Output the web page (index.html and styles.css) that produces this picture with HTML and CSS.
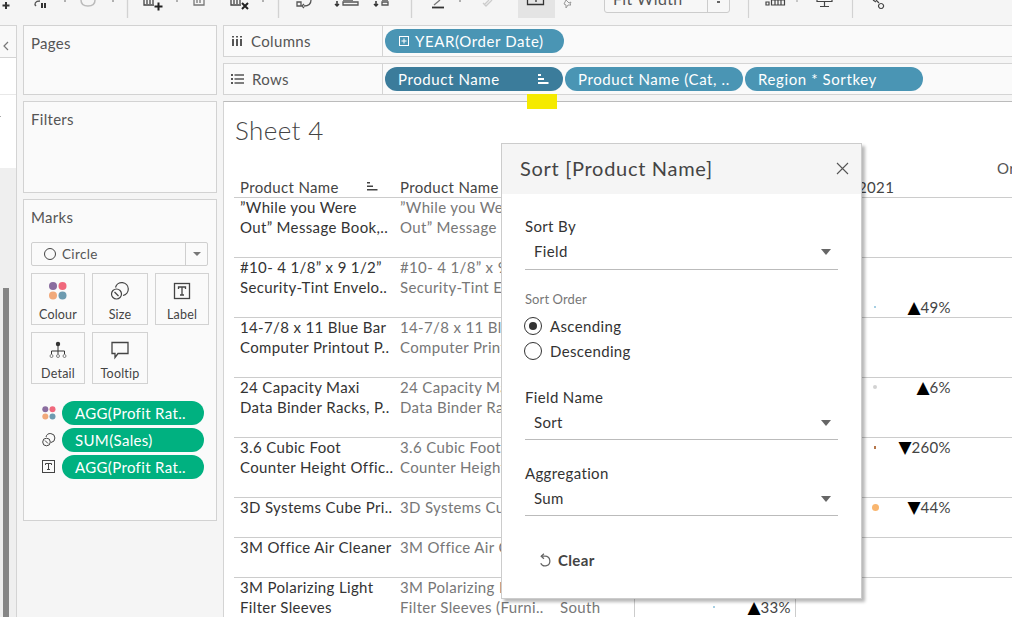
FILE: index.html
```html
<!DOCTYPE html>
<html lang="en">
<head>
<meta charset="utf-8">
<title>Sheet 4</title>
<link rel="stylesheet" href="styles.css">
</head>
<body>
<header class="toolbar">
  <svg class="tb-left" width="604" height="25" viewBox="0 0 604 25" fill="none" stroke="#444" stroke-width="1.3">
    <path d="M6 2v7M2.500 5.500h7" stroke="#333" stroke-width="2"/>
    <path d="M40 1c-5 0-6 3-4 5" stroke="#555"/>
    <path d="M42 3v5M45 3v5" stroke="#333" stroke-width="2"/>
    <path d="M81 0c0 4 3 6 7 6s7-2 7-6" stroke="#bbb" stroke-width="1.500"/>
    <path d="M64 1h2M112 1h2M176 1h2M262 1h2M459 1h2" stroke="#999"/>
    <path d="M127.500 0v18M278.500 0v18M411.500 0v18" stroke="#d2d2d2"/>
    <path d="M144 0v5h10M147 0v4M150 0v4M153 0v4" stroke="#444"/>
    <path d="M158.500 2.500v8M154.500 6.500h8" stroke="#222" stroke-width="2"/>
    <path d="M194 0v5h10v-5M197 0v3M200 0v3" stroke="#777"/>
    <path d="M231 0v5h10M234 0v4M237 0v4M240 0v4" stroke="#444"/>
    <path d="M242 3l6 6M248 3l-6 6" stroke="#222" stroke-width="2"/>
    <path d="M297 2h4v4h-4zM311 0c0 4-3 6-7 6M304 4l-2 2 2 2" stroke="#555"/>
    <path d="M337 1v5M335 4l2 2 2-2" stroke="#333" stroke-width="1.500"/>
    <path d="M343 0h10M343 2v3h15v-3z" stroke="#555"/>
    <path d="M376 1v5M374 4l2 2 2-2" stroke="#333" stroke-width="1.500"/>
    <path d="M382 2v3h6v-3zM382 0h6" stroke="#555"/>
    <path d="M432 7.500h12" stroke="#333" stroke-width="1.800"/>
    <path d="M434 5l6-5" stroke="#777"/>
    <path d="M484 5l5-5M483 3l3 3 6-6" stroke="#ccc"/>
    <rect x="518" y="-2" width="37" height="20" fill="#e4e4e4" stroke="none"/>
    <path d="M527.500 0v4.500h16v-4.500M536 0v2" stroke="#333"/>
    <path d="M566 0l3 3 2-1-1 2 1 1-3 0-2 3 0-3-2-1z" stroke="#999" stroke-width="1"/>
  </svg>
  <div class="zoom-select">
    <span class="zoom-text">Fit Width</span>
    <span class="zoom-arrow"><i class="zoom-caret"></i></span>
  </div>
  <svg class="tb-right" width="282" height="25" viewBox="730 0 282 25" fill="none" stroke="#444" stroke-width="1.200">
    <path d="M748.500 0v18M852.500 0v18" stroke="#d2d2d2"/>
    <path d="M766 2h3v3h-3zM771.500 5V0h13v5zM775 0v5M778 0v5M781 0v5" stroke="#444"/>
    <path d="M796 1h2" stroke="#999"/>
    <path d="M817 0v1.500h15v-1.500M824.500 1.500v5M820 6.500h9" stroke="#444"/>
    <path d="M873 0l3 2M881 3.500a2.500 2.500 0 1 0 .1 0zM876 0l3 3" stroke="#444"/>
  </svg>
</header>

<main class="workspace">
  <aside class="strip">
    <div class="strip-head"><svg width="6" height="10" viewBox="0 0 6 10" fill="none" stroke="#777" stroke-width="1.200"><path d="M5 1L1 5l4 4"/></svg></div>
    <div class="strip-white"><div class="strip-cell"></div><div class="strip-cell strip-cell-tall"><i class="strip-tick"></i></div></div>
    <div class="strip-grey"><div class="strip-thumb"></div></div>
  </aside>

  <section class="cards">
    <div class="card card-pages"><h2 class="card-title">Pages</h2></div>
    <div class="card card-filters"><h2 class="card-title">Filters</h2></div>
    <div class="card card-marks">
      <h2 class="card-title">Marks</h2>
      <div class="mark-select">
        <span class="mark-select-label"><i class="ring"></i>Circle</span>
        <span class="mark-select-arrow"><i class="caret-small"></i></span>
      </div>
      <div class="mark-grid">
        <div class="mark-btn">
          <svg width="20" height="20" viewBox="0 0 20 20"><circle cx="5" cy="5" r="4" fill="#8a6d9f"/><circle cx="14.500" cy="5" r="4" fill="#f0687c"/><circle cx="5" cy="14.500" r="4" fill="#f1a97a"/><circle cx="14.500" cy="14.500" r="4" fill="#6d9bb0"/></svg>
          <span>Colour</span>
        </div>
        <div class="mark-btn">
          <svg width="20" height="20" viewBox="0 0 20 20" fill="none" stroke="#444" stroke-width="1.200"><path d="M5.500 6.500a6.500 6.500 0 1 1 7.500 8"/><circle cx="6.500" cy="13" r="5"/><path d="M4.500 11l4 4"/></svg>
          <span>Size</span>
        </div>
        <div class="mark-btn">
          <svg width="20" height="20" viewBox="0 0 20 20" fill="none" stroke="#444" stroke-width="1.300"><rect x="2.500" y="2.500" width="15" height="15"/><path d="M6.500 8V6h7v2M10 6v8M8 14h4"/></svg>
          <span>Label</span>
        </div>
        <div class="mark-btn">
          <svg width="20" height="20" viewBox="0 0 20 20" fill="#333" stroke="#333"><circle cx="10" cy="4" r="2.200" stroke="none"/><path d="M10 6v8M3.500 11h13M3.500 11v3M16.500 11v3" fill="none"/><circle cx="3.500" cy="16" r="1.500" stroke-width=".6" fill="none"/><circle cx="10" cy="16" r="1.500" stroke-width=".6" fill="none"/><circle cx="16.500" cy="16" r="1.500" stroke-width=".6" fill="none"/></svg>
          <span>Detail</span>
        </div>
        <div class="mark-btn">
          <svg width="20" height="20" viewBox="0 0 20 20" fill="none" stroke="#444" stroke-width="1.300"><path d="M2 2.500h16v11H8l-3 4v-4H2z"/></svg>
          <span>Tooltip</span>
        </div>
      </div>
      <ul class="mark-pills">
        <li class="mark-pill-row">
          <svg width="14" height="14" viewBox="0 0 14 14"><circle cx="3.300" cy="3.300" r="3" fill="#8a6d9f"/><circle cx="10.500" cy="3.300" r="3" fill="#f0687c"/><circle cx="3.300" cy="10.500" r="3" fill="#f1a97a"/><circle cx="10.500" cy="10.500" r="3" fill="#6d9bb0"/></svg>
          <span class="pill-green">AGG(Profit Rat..</span>
        </li>
        <li class="mark-pill-row">
          <svg width="14" height="14" viewBox="0 0 14 14" fill="none" stroke="#444"><path d="M4 4a4.500 4.500 0 1 1 5 5.500"/><circle cx="4.500" cy="9" r="3.800"/><path d="M3 7.500l3 3"/></svg>
          <span class="pill-green">SUM(Sales)</span>
        </li>
        <li class="mark-pill-row">
          <svg width="14" height="14" viewBox="0 0 14 14" fill="none" stroke="#444"><rect x=".5" y=".5" width="12" height="12"/><path d="M3.500 5V3.500h6V5M6.500 3.500v6M5 9.500h3"/></svg>
          <span class="pill-green">AGG(Profit Rat..</span>
        </li>
      </ul>
    </div>
  </section>

  <section class="main-col">
    <div class="shelf">
      <div class="shelf-label">
        <svg width="12" height="10" viewBox="0 0 12 10" fill="#555"><path d="M1 3h2v7H1zM5 3h2v7H5zM9 3h2v7H9zM1 0h2v1.500H1zM5 0h2v1.500H5zM9 0h2v1.500H9z"/></svg>
        <span>Columns</span>
      </div>
      <div class="shelf-pills">
        <span class="pill pill-year">
          <svg width="10" height="10" viewBox="0 0 10 10" fill="none" stroke="#fff"><rect x=".5" y=".5" width="9" height="9"/><path d="M5 2.500v5M2.500 5h5"/></svg>
          YEAR(Order Date)
        </span>
      </div>
    </div>
    <div class="shelf">
      <div class="shelf-label">
        <svg width="13" height="10" viewBox="0 0 13 10" fill="#555"><path d="M0 0h2v2H0zM3.500 .2H13v1.500H3.500zM0 4h2v2H0zM3.500 4.200H13v1.500H3.500zM0 8h2v2H0zM3.500 8.200H13v1.500H3.500z"/></svg>
        <span>Rows</span>
      </div>
      <div class="shelf-pills">
        <span class="pill pill-wide pill-active">
          <span>Product Name</span>
          <svg width="11" height="10" viewBox="0 0 11 10" fill="#fff"><path d="M0 0h3v2H0zM0 4h6v2H0zM0 8h10.500v2H0z"/></svg>
        </span>
        <span class="pill pill-wide">Product Name (Cat, ..</span>
        <span class="pill pill-wide">Region * Sortkey</span>
      </div>
    </div>

    <div class="view">
      <h1 class="sheet-title">Sheet 4</h1>
      <div class="top-head"><span>Order Date</span></div>
      <div class="table">
        <div class="row row-head">
          <div class="cell c1 head-sort"><span>Product Name</span>
            <svg width="11" height="9" viewBox="0 0 11 9" fill="#444"><path d="M0 0h3v1.500H0zM0 3.500h6V5H0zM0 7h10.500v1.500H0z"/></svg>
          </div>
          <div class="cell c2 head-dark">Product Name</div>
          <div class="cell c3"></div>
          <div class="cell c4"></div>
          <div class="cell c5 head-year">2021</div>
        </div>
        <div class="row">
          <div class="cell c1">”While you Were<br>Out” Message Book,..</div>
          <div class="cell c2">”While you Were<br>Out” Message Book,..</div>
          <div class="cell c3"></div><div class="cell c4"></div><div class="cell c5"></div>
        </div>
        <div class="row">
          <div class="cell c1">#10- 4 1/8” x 9 1/2”<br>Security-Tint Envelo..</div>
          <div class="cell c2">#10- 4 1/8” x 9 1/2”<br>Security-Tint Envelo..</div>
          <div class="cell c3"></div><div class="cell c4"></div>
          <div class="cell c5 val-third"><div class="val"><span class="dot-slot"><i class="dot dot-blue"></i></span><span class="delta"><b class="tri">▲</b>49%</span></div></div>
        </div>
        <div class="row">
          <div class="cell c1">14-7/8 x 11 Blue Bar<br>Computer Printout P..</div>
          <div class="cell c2">14-7/8 x 11 Blue Bar<br>Computer Printout P..</div>
          <div class="cell c3"></div><div class="cell c4"></div><div class="cell c5"></div>
        </div>
        <div class="row">
          <div class="cell c1">24 Capacity Maxi<br>Data Binder Racks, P..</div>
          <div class="cell c2">24 Capacity Maxi<br>Data Binder Racks, P..</div>
          <div class="cell c3"></div><div class="cell c4"></div>
          <div class="cell c5"><div class="val"><span class="dot-slot"><i class="dot dot-grey"></i></span><span class="delta"><b class="tri">▲</b>6%</span></div></div>
        </div>
        <div class="row">
          <div class="cell c1">3.6 Cubic Foot<br>Counter Height Offic..</div>
          <div class="cell c2">3.6 Cubic Foot<br>Counter Height Offic..</div>
          <div class="cell c3"></div><div class="cell c4"></div>
          <div class="cell c5"><div class="val"><span class="dot-slot"><i class="dot dot-brown"></i></span><span class="delta"><b class="tri">▼</b>260%</span></div></div>
        </div>
        <div class="row row-short">
          <div class="cell c1">3D Systems Cube Pri..</div>
          <div class="cell c2">3D Systems Cube Pri..</div>
          <div class="cell c3"></div><div class="cell c4"></div>
          <div class="cell c5"><div class="val"><span class="dot-slot"><i class="dot dot-orange"></i></span><span class="delta"><b class="tri">▼</b>44%</span></div></div>
        </div>
        <div class="row row-short">
          <div class="cell c1">3M Office Air Cleaner</div>
          <div class="cell c2">3M Office Air Cleaner</div>
          <div class="cell c3"></div><div class="cell c4"></div><div class="cell c5"></div>
        </div>
        <div class="row">
          <div class="cell c1">3M Polarizing Light<br>Filter Sleeves</div>
          <div class="cell c2">3M Polarizing Light<br>Filter Sleeves (Furni..</div>
          <div class="cell c3 val-second">South</div>
          <div class="cell c4 val-second"><div class="val"><span class="dot-slot"><i class="dot dot-blue"></i></span><span class="delta"><b class="tri">▲</b>33%</span></div></div>
          <div class="cell c5"></div>
        </div>
      </div>
    </div>
  </section>
</main>

<div class="marker"></div>

<div class="modal">
  <div class="modal-head">
    <span class="modal-title">Sort [Product Name]</span>
    <svg width="13" height="13" viewBox="0 0 13 13" fill="none" stroke="#555" stroke-width="1.100"><path d="M1 1l11 11M12 1L1 12"/></svg>
  </div>
  <div class="modal-body">
    <div class="field field-first">
      <div class="field-label">Sort By</div>
      <div class="field-select"><span>Field</span><i class="caret"></i></div>
    </div>
    <div class="order-label">Sort Order</div>
    <div class="radio-row"><i class="radio radio-on"></i><span>Ascending</span></div>
    <div class="radio-row"><i class="radio"></i><span>Descending</span></div>
    <div class="field field-name">
      <div class="field-label">Field Name</div>
      <div class="field-select"><span>Sort</span><i class="caret"></i></div>
    </div>
    <div class="field field-agg">
      <div class="field-label">Aggregation</div>
      <div class="field-select"><span>Sum</span><i class="caret"></i></div>
    </div>
    <div class="clear">
      <svg width="14" height="15" viewBox="0 0 13 14" fill="none" stroke="#666" stroke-width="1.200"><path d="M3 3h3.500a4.500 4.500 0 1 1-4 6.500"/><path d="M5.500 .8L3 3l2.500 2.300"/></svg>
      <span>Clear</span>
    </div>
  </div>
</div>
</body>
</html>
```
FILE: styles.css
```css
* { box-sizing: border-box; }
html, body { margin: 0; padding: 0; }
body {
  width: 1012px;
  height: 617px;
  overflow: hidden;
  position: relative;
  background: #f5f5f5;
  font-family: "Lato", "Liberation Sans", sans-serif;
  font-size: 15px;
  color: #333;
  letter-spacing: .35px;
}
h1, h2, ul { margin: 0; padding: 0; font-weight: normal; }
ul { list-style: none; }
i { display: block; }

/* toolbar */
.toolbar { display: flex; height: 25px; overflow: hidden; }
.tb-left, .tb-right { flex: none; display: block; }
.zoom-select {
  flex: none;
  width: 126px;
  height: 14px;
  margin-top: -1px;
  display: flex;
  justify-content: space-between;
  border: 1px solid #ccc;
  border-radius: 0 0 3px 3px;
  background: #f7f7f7;
  overflow: hidden;
}
.zoom-text { margin: -10px 0 0 8px; font-size: 16px; line-height: 18px; color: #555; }
.zoom-arrow { width: 22px; border-left: 1px solid #ccc; position: relative; }
.zoom-caret { width: 3px; height: 2px; margin: 1px 0 0 9px; background: #666; }

/* main layout */
.workspace { display: flex; height: 592px; }
.strip {
  flex: none;
  width: 17px;
  display: flex;
  flex-direction: column;
  border-right: 1px solid #d4d4d4;
  border-top: 1px solid #d4d4d4;
}
.strip-head {
  height: 32px;
  flex: none;
  background: #f9f9f9;
  border-bottom: 1px solid #d4d4d4;
  padding: 10px 0 0 3px;
}
.strip-white { flex: none; height: 110px; background: #fff; }
.strip-cell { height: 37px; border-bottom: 1px solid #e8e8e8; }
.strip-cell-tall { border-bottom: 0; padding-top: 21px; }
.strip-tick { width: 1px; height: 1px; background: #aaa; }
.strip-grey { flex: 1; background: #efefef; padding: 120px 7px 0 3px; overflow: hidden; }
.strip-thumb { height: 329px; background: #868686; }

.cards {
  flex: none;
  width: 206px;
  padding-left: 6px;
  display: flex;
  flex-direction: column;
  gap: 6px;
}
.card { width: 194px; background: #fafafa; border: 1px solid #d2d2d2; padding: 0 7px; }
.card-pages { height: 70px; }
.card-filters { height: 92px; }
.card-marks { height: 322px; }
.card-title { font-size: 15px; line-height: 18px; color: #555; padding-top: 8px; letter-spacing: .3px; }

.mark-select {
  margin-top: 16px;
  width: 177px;
  height: 24px;
  display: flex;
  justify-content: space-between;
  border: 1px solid #cfcfcf;
  border-radius: 2px;
  font-size: 13.500px;
  color: #555;
}
.mark-select-label { display: flex; align-items: center; gap: 6px; padding-left: 12px; }
.ring { width: 12px; height: 12px; border: 1px solid #444; border-radius: 50%; }
.mark-select-arrow { width: 22px; border-left: 1px solid #cfcfcf; display: flex; align-items: center; justify-content: center; }
.caret-small { width: 0; height: 0; border: 4px solid transparent; border-top: 4px solid #777; border-bottom: 0; }

.mark-grid {
  margin-top: 7px;
  display: grid;
  grid-template-columns: 54px 56px 54px;
  column-gap: 7px;
  row-gap: 7px;
  grid-auto-rows: 52px;
  width: 178px;
}
.mark-btn {
  border: 1px solid #d2d2d2;
  display: flex;
  flex-direction: column;
  align-items: center;
  padding-top: 7px;
  font-size: 12.500px;
  line-height: 14px;
  color: #444;
  gap: 7px;
  letter-spacing: .2px;
}
.mark-pills { margin-top: 17px; display: flex; flex-direction: column; gap: 3px; }
.mark-pill-row { display: flex; align-items: center; gap: 6px; padding-left: 11px; }
.mark-pill-row svg { flex: none; }
.pill-green {
  width: 142px;
  height: 24px;
  line-height: 24px;
  padding-left: 13px;
  border-radius: 12px;
  background: #00b180;
  color: #fff;
}

.main-col { flex: 1; min-width: 0; display: flex; flex-direction: column; gap: 6px; }
.shelf {
  height: 32px;
  flex: none;
  display: flex;
  background: #fafafa;
  border-top: 1px solid #d4d4d4;
  border-bottom: 1px solid #d4d4d4;
  border-left: 1px solid #d4d4d4;
}
.shelf-label {
  width: 159px;
  flex: none;
  display: flex;
  align-items: center;
  gap: 8px;
  padding-left: 7px;
  border-right: 1px solid #d4d4d4;
  font-size: 15px;
  color: #555;
}
.shelf-pills { display: flex; align-items: center; gap: 2px; padding-left: 2px; }
.pill {
  height: 24px;
  display: flex;
  align-items: center;
  border-radius: 12px;
  background: #4a95b4;
  color: #fff;
  padding-left: 13px;
  letter-spacing: .6px;
}
.pill-year { width: 179px; gap: 6px; padding-left: 14px; }
.pill-wide { width: 178px; }
.pill-active { background: #3b7c9b; width: 178px; padding-right: 14px; justify-content: space-between; margin-left: 0; }

/* view */
.view {
  flex: 1;
  min-height: 0;
  background: #fff;
  border-top: 1px solid #bbb;
  border-left: 1px solid #d4d4d4;
  overflow: hidden;
  padding-left: 10px;
}
.sheet-title {
  font-size: 26px;
  font-weight: 300;
  line-height: 30px;
  color: #444;
  padding: 13px 0 0 1px;
  letter-spacing: .4px;
  height: 45px;
}
.top-head { height: 23px; padding: 12px 0 0 763px; line-height: 18px; white-space: nowrap; color: #555; }
.table { width: 800px; }
.row {
  display: grid;
  grid-template-columns: 160px 160px 81px 161px 238px;
  height: 60px;
  border-bottom: 1px solid #ccc;
  line-height: 20px;
  overflow: hidden;
}
.row-head { height: 28px; padding-top: 8px; }
.row-short { height: 40px; }
.cell { padding-left: 6px; white-space: nowrap; overflow: hidden; margin-top: -1px; }
.c1 { color: #333; }
.c2, .c3 { color: #777; }
.c3 { border-right: 1px solid #ccc; margin-top: 0; padding-top: 0; }
.c4 { border-right: 1px solid #ccc; padding-left: 0; margin-top: 0; }
.c5 { padding-left: 0; }
.head-sort { display: flex; align-items: flex-start; justify-content: space-between; padding-right: 16px; }
.head-sort svg { margin-top: 5px; }
.head-sort, .head-dark { color: #444; }
.head-year { padding-left: 62px; color: #444; }
.c5.val-third { padding-top: 40px; }
.c3.val-second, .c4.val-second { padding-top: 19px; }
.val { display: flex; align-items: center; padding-left: 72px; height: 20px; }
.dot-slot { width: 14px; flex: none; display: flex; justify-content: center; }
.delta { width: 70px; flex: none; text-align: right; color: #444; white-space: nowrap; }
.c5 .delta { width: 69px; }
.tri { font-family: "DejaVu Sans", sans-serif; font-weight: normal; color: #000; font-size: 17px; line-height: 20px; letter-spacing: 0; }
.dot { border-radius: 50%; }
.dot-blue { width: 2px; height: 2px; border-radius: 0; background: #a6cfe3; }
.dot-grey { width: 4px; height: 4px; background: #d2d2d2; }
.dot-brown { width: 2px; height: 3px; border-radius: 0; background: #b5764a; }
.dot-orange { width: 7px; height: 7px; background: #f9b66f; }

/* overlays */
.marker { position: absolute; left: 527px; top: 94px; width: 30px; height: 15px; background: #f5ea00; }
.modal {
  position: absolute;
  left: 501px;
  top: 143px;
  width: 361px;
  height: 456px;
  background: #fff;
  border: 1px solid #ccc;
  box-shadow: 3px 3px 3px rgba(0,0,0,.28);
}
.modal-head {
  height: 50px;
  background: #f5f5f5;
  display: flex;
  align-items: center;
  justify-content: space-between;
  padding: 0 12px 2px 18px;
}
.modal-title { font-size: 20px; color: #444; letter-spacing: .7px; }
.modal-body { padding: 0 23px 0 23px; }
.field-label { line-height: 20px; color: #333; }
.field-select {
  height: 33px;
  margin-top: 0;
  display: flex;
  align-items: flex-start;
  justify-content: space-between;
  padding: 5px 7px 0 9px;
  border-bottom: 1px solid #bbb;
  line-height: 20px;
}
.field-first .field-select { height: 34px; }
.caret { width: 0; height: 0; margin-top: 8px; border: 5px solid transparent; border-top: 6px solid #666; border-bottom: 0; }
.field-first { padding-top: 22px; }
.order-label { margin-top: 20px; font-size: 13px; line-height: 18px; color: #777; letter-spacing: .1px; }
.radio-row { display: flex; align-items: center; gap: 8px; height: 25px; margin-left: -1px; }
.order-label + .radio-row { margin-top: 5px; }
.radio { width: 18px; height: 18px; border: 1px solid #333; border-radius: 50%; flex: none; position: relative; }
.radio-on::after { content: ""; display: block; width: 8px; height: 8px; margin: 4px; border-radius: 50%; background: #333; }
.field-name { margin-top: 24px; }
.field-agg { margin-top: 23px; }
.clear {
  margin-top: 34px;
  padding-left: 13px;
  display: flex;
  align-items: center;
  gap: 6px;
  font-weight: 700;
  line-height: 20px;
  color: #444;
}
```
